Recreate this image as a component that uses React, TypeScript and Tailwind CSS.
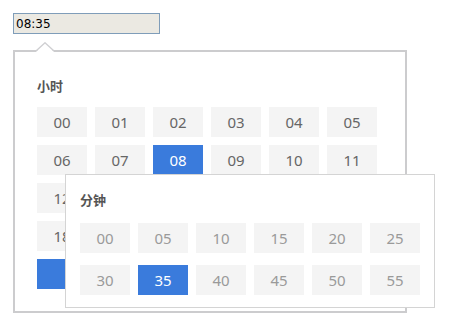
import React from "react";

const hours = Array.from({ length: 24 }, (_, i) => String(i).padStart(2, "0"));
const minutes = Array.from({ length: 12 }, (_, i) => String(i * 5).padStart(2, "0"));

function Cell({ label, active, muted }: { label: string; active?: boolean; muted?: boolean }) {
  return (
    <div
      className={
        "flex h-[30px] w-[50px] items-center justify-center text-[15px] " +
        (active ? "bg-[#3a7bdc] text-white" : muted ? "bg-[#f4f4f4] text-[#9a9a9a]" : "bg-[#f4f4f4] text-[#666]")
      }
    >
      {label}
    </div>
  );
}

export default function App() {
  return (
    <div className="h-[332px] w-[450px] bg-white pl-[13px] pt-[13px] font-['Noto_Sans','Noto_Sans_CJK_SC',sans-serif]">
      <div className="flex h-[21px] w-[147px] items-center border border-[#7f9db9] bg-[#ebe9e2] pl-[2px] font-['DejaVu_Sans',sans-serif] text-[12px] text-black">
        08:35
      </div>

      <div className="relative mt-[16px] h-[263px] w-[394px] border-2 border-[#ccccce] bg-white pl-[22px] pt-[26px]">
        <svg className="absolute left-[21px] top-[-10px]" width="18" height="10" viewBox="0 0 18 10">
          <polygon points="0,10 9,1 18,10" fill="white" />
          <polyline points="0.5,8.5 9,0.8 17.5,8.5" fill="none" stroke="#cfcfd2" strokeWidth="1.4" />
        </svg>

        <div className="mb-[13px] text-[13px] font-bold leading-4 text-[#555]">小时</div>
        <div className="grid grid-cols-[repeat(6,50px)] gap-2">
          {hours.map((h) => (
            <Cell key={h} label={h} active={h === "08"} />
          ))}
          <div className="h-[30px] w-[50px] bg-[#3a7bdc]" />
        </div>

        <div className="absolute left-[50px] top-[122px] h-[134px] w-[370px] border border-[#d4d4d4] bg-white pl-[14px] pt-[17px]">
          <div className="mb-[15px] text-[13px] font-bold leading-4 text-[#555]">分钟</div>
          <div className="grid grid-cols-[repeat(6,50px)] gap-x-2 gap-y-3">
            {minutes.map((m) => (
              <Cell key={m} label={m} active={m === "35"} muted />
            ))}
          </div>
        </div>
      </div>
    </div>
  );
}
